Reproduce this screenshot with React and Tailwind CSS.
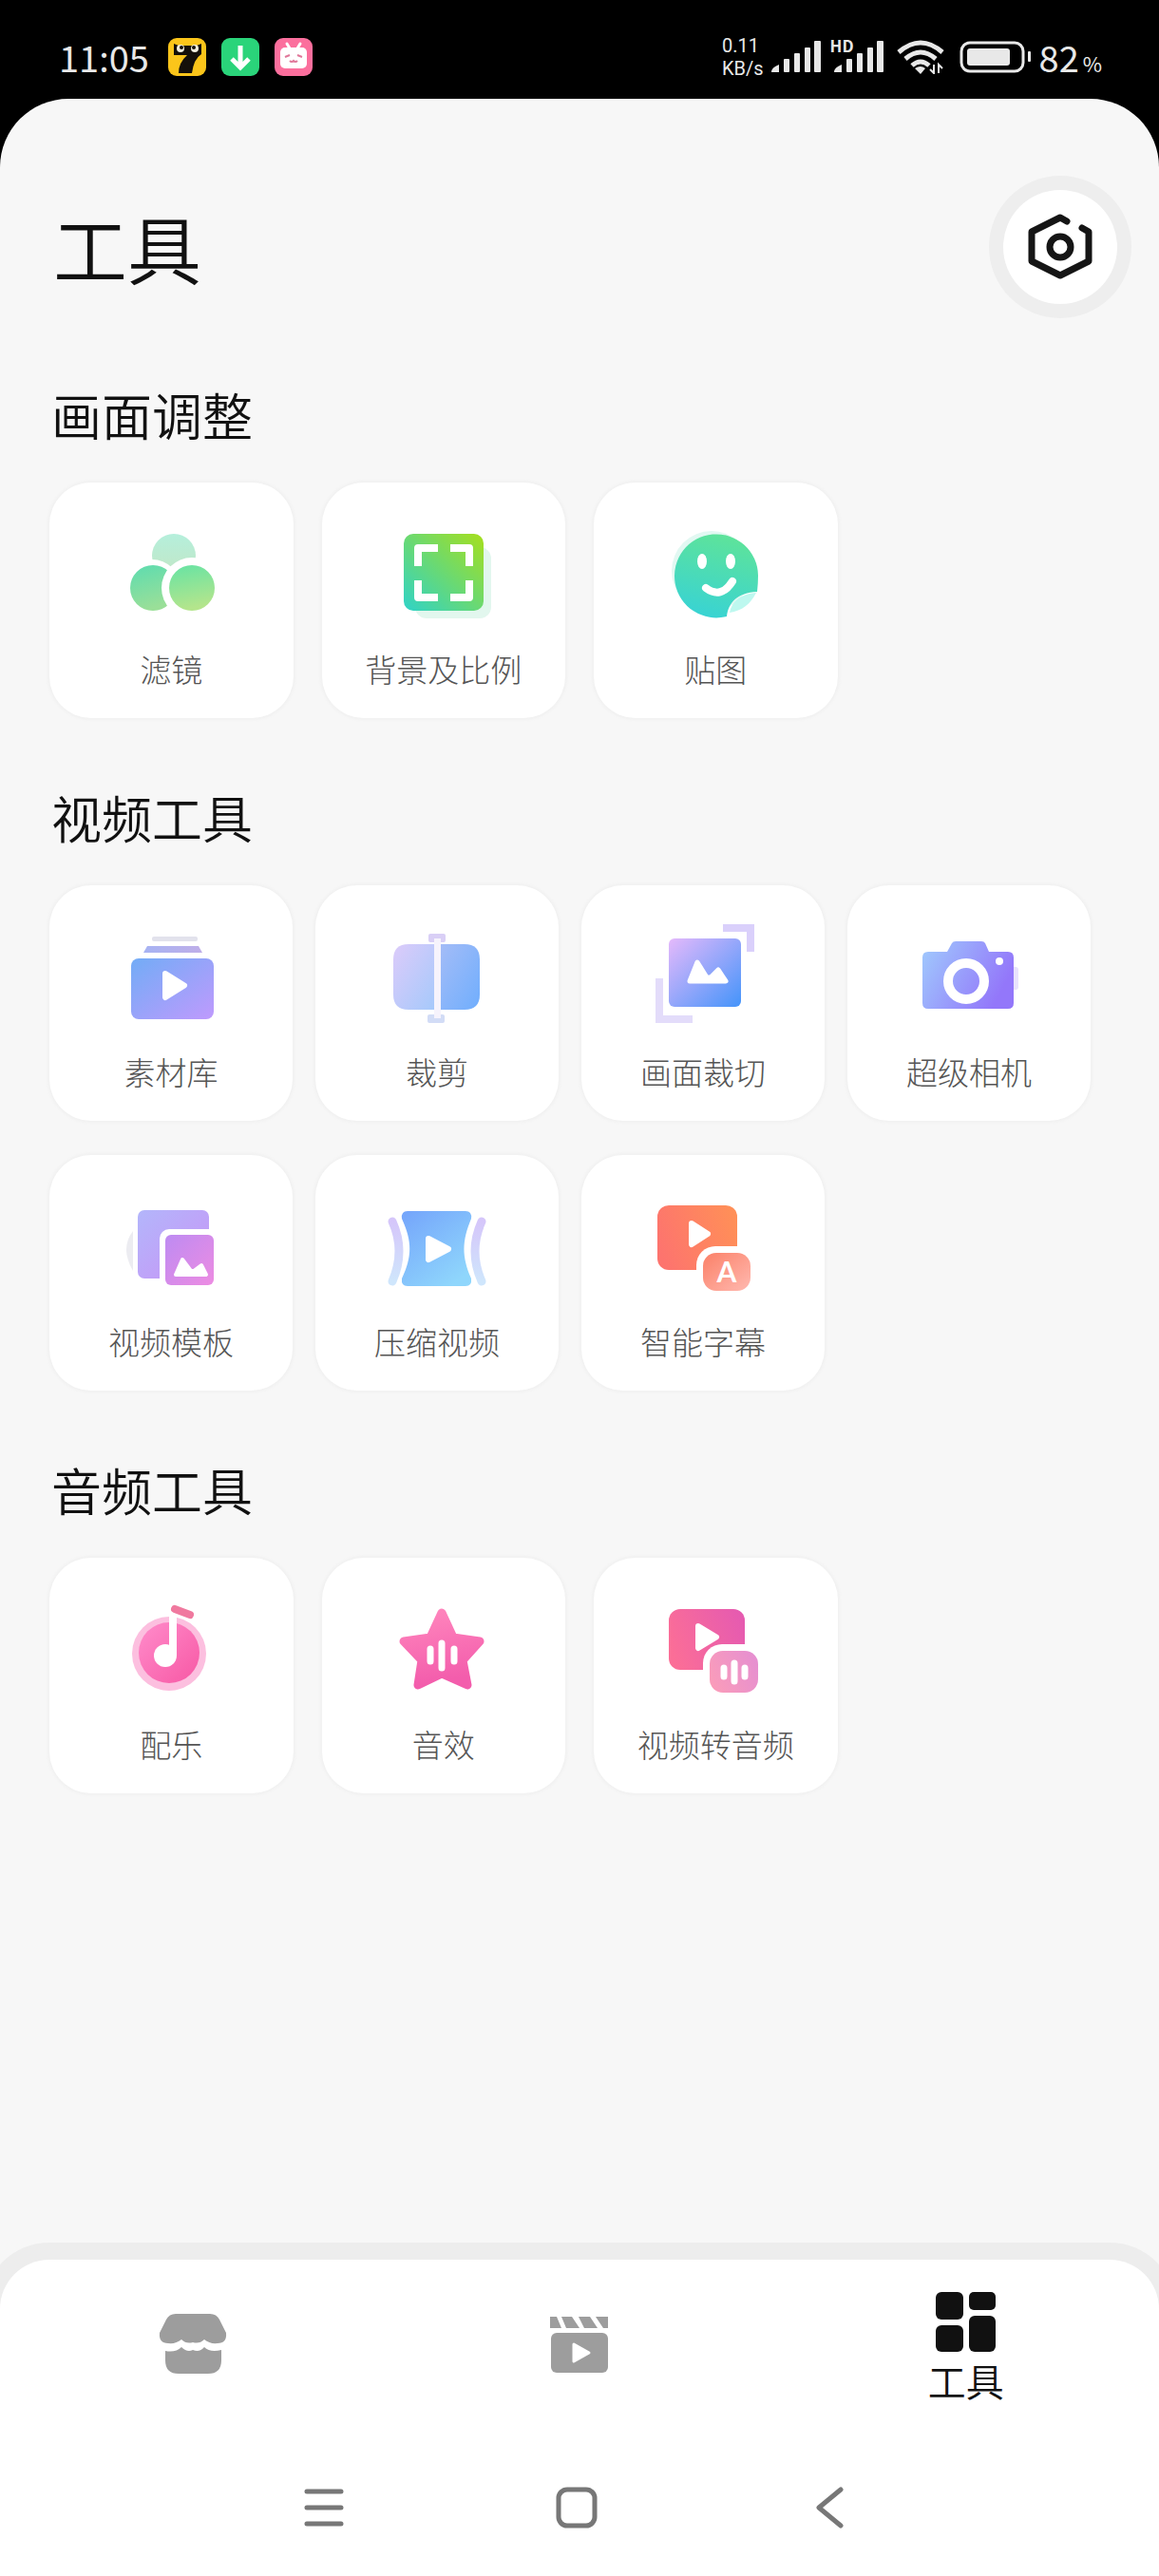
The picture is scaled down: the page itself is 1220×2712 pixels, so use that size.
import React from "react";

const play = (x, y, w, h) => `M${x + 3} ${y + 3} L${x + w - 3} ${y + h / 2} L${x + 3} ${y + h - 3} Z`;

function Play({ x, y, w, h }) {
  return <path d={play(x, y, w, h)} fill="#fff" stroke="#fff" strokeWidth="6" strokeLinejoin="round" />;
}

function Grad({ id, from, to, x1 = 0, y1 = 0, x2 = 1, y2 = 1 }) {
  return (
    <linearGradient id={id} x1={x1} y1={y1} x2={x2} y2={y2}>
      <stop offset="0" stopColor={from} />
      <stop offset="1" stopColor={to} />
    </linearGradient>
  );
}

function Icon({ children }) {
  return (
    <svg className="size-[120px]" viewBox="0 0 120 120" fill="none" aria-hidden="true">
      {children}
    </svg>
  );
}

const FilterIcon = () => (
  <Icon>
    <defs>
      <Grad id="f1" from="#b5efdc" to="#c3e6c4" x2={0} />
      <Grad id="f2" from="#5cdcb0" to="#9adf98" x2={0.3} />
      <Grad id="f3" from="#66e3a4" to="#b4e58c" x2={0.2} />
    </defs>
    <circle cx="63" cy="41" r="23" fill="url(#f1)" />
    <circle cx="40" cy="75" r="30" fill="#fff" />
    <circle cx="82" cy="75" r="30" fill="#fff" />
    <circle cx="41" cy="75" r="24" fill="url(#f2)" />
    <circle cx="82" cy="75" r="32" fill="#fff" />
    <circle cx="82" cy="75" r="24" fill="url(#f3)" />
  </Icon>
);

const RatioIcon = () => (
  <Icon>
    <defs>
      <Grad id="r1" from="#2fd3c8" to="#a6df1c" x1={0} y1={1} x2={1} y2={0} />
    </defs>
    <rect x="30" y="32" width="80" height="75" rx="12" fill="#e2f7ee" />
    <rect x="18" y="18" width="84" height="81" rx="10" fill="url(#r1)" />
    <path d="M54 33H33V52M67 33H87V52M33 67V85H54M87 67V85H67" stroke="#fff" strokeWidth="8" strokeLinejoin="round" />
  </Icon>
);

const StickerIcon = () => (
  <Icon>
    <defs>
      <Grad id="s1" from="#5ee39a" to="#38d3d4" x1={0.6} y1={0} x2={0.35} y2={1} />
    </defs>
    <circle cx="56" cy="57" r="42" fill="#e2f8f2" />
    <path d="M105 62A44 44 0 1 0 72 105C74 90 83 80 104 79Q105 70 105 62Z" fill="url(#s1)" />
    <path d="M75 101C77 90 86 81 103 80C97 92 88 99 75 101Z" fill="#bdf8ef" />
    <ellipse cx="46" cy="47" rx="5" ry="8" fill="#fff" />
    <ellipse cx="76" cy="47" rx="5" ry="8" fill="#fff" />
    <path d="M50 75Q66 87 78 68" stroke="#fff" strokeWidth="8" strokeLinecap="round" />
  </Icon>
);

const LibraryIcon = () => (
  <Icon>
    <defs>
      <Grad id="l1" from="#72acf6" to="#bf9afd" />
      <Grad id="l2" from="#a6b3f3" to="#bfaee8" y2={0} />
    </defs>
    <rect x="40" y="18" width="48" height="5" rx="2" fill="#e2e2ec" />
    <path d="M35 28H89L93 35H31Z" fill="url(#l2)" />
    <rect x="18" y="41" width="87" height="64" rx="8" fill="url(#l1)" />
    <Play x={51} y={54} w={26} h={31} />
  </Icon>
);

const TrimIcon = () => (
  <Icon>
    <defs>
      <Grad id="t1" from="#dccbfa" to="#a6c9fb" />
      <Grad id="t2" from="#a3bcf7" to="#70aefd" />
    </defs>
    <path d="M57 26V95H30Q14 95 14 79V42Q14 26 30 26Z" fill="url(#t1)" />
    <path d="M64 26H89Q105 26 105 42V79Q105 95 89 95H64Z" fill="url(#t2)" />
    <rect x="51" y="15" width="18" height="9" rx="2" fill="#d9cff6" />
    <rect x="50" y="100" width="18" height="9" rx="2" fill="#d2dcf6" />
    <rect x="57" y="20" width="7" height="84" fill="#f6f3fc" />
  </Icon>
);

const CropIcon = () => (
  <Icon>
    <defs>
      <Grad id="c1" from="#e5b9fb" to="#4494fa" />
    </defs>
    <path d="M81 9H110V34" stroke="#dad0fb" strokeWidth="8" />
    <path d="M14 62V105H49" stroke="#e3dcfa" strokeWidth="8" />
    <rect x="24" y="20" width="76" height="72" rx="6" fill="url(#c1)" />
    <path d="M46 65L54 45L64 61H68L76 53L84 65Z" fill="#fff" stroke="#fff" strokeWidth="5" strokeLinejoin="round" />
  </Icon>
);

const CameraIcon = () => (
  <Icon>
    <defs>
      <Grad id="m1" from="#a0cbfd" to="#9377fa" y2={0.4} />
    </defs>
    <rect x="104" y="50" width="8" height="24" rx="3" fill="#e9e2fd" />
    <path d="M17 34H37L42 25Q43 23 46 23H73Q76 23 77 25L81 34H101Q107 34 107 40V88Q107 94 101 94H17Q11 94 11 88V40Q11 34 17 34Z" fill="url(#m1)" />
    <circle cx="57" cy="65" r="19" stroke="#fff" strokeWidth="10" />
    <circle cx="92" cy="44" r="4" fill="#fff" />
  </Icon>
);

const TemplateIcon = () => (
  <Icon>
    <defs>
      <Grad id="p1" from="#b3b6fb" to="#c894f6" />
      <Grad id="p2" from="#bd8bf2" to="#ed8ce2" />
    </defs>
    <path d="M20 44Q6 62 20 86Z" fill="#ececf1" />
    <rect x="25" y="22" width="75" height="72" rx="7" fill="url(#p1)" />
    <rect x="48" y="42" width="64" height="66" rx="10" fill="#fff" />
    <rect x="54" y="48" width="51" height="53" rx="6" fill="url(#p2)" />
    <path d="M65 90L72 74L81 86H84L92 80L97 90Z" fill="#fff" stroke="#fff" strokeWidth="4" strokeLinejoin="round" />
  </Icon>
);

const CompressIcon = () => (
  <Icon>
    <defs>
      <Grad id="z1" from="#74a4fb" to="#8fd6fc" x2={0.7} />
      <Grad id="z2" from="#d5c6fa" to="#cfe6fc" x2={0} />
    </defs>
    <path d="M13 34Q27 65 13 97" stroke="url(#z2)" strokeWidth="9" strokeLinecap="round" />
    <path d="M107 34Q93 65 107 97" stroke="url(#z2)" strokeWidth="9" strokeLinecap="round" />
    <path d="M29 23H90Q97 23 96 31C86 55 86 71 96 94Q97 102 90 102H29Q22 102 23 94C34 71 34 55 23 31Q22 23 29 23Z" fill="url(#z1)" stroke="#fff" strokeWidth="5" paintOrder="stroke" />
    <Play x={48} y={49} w={27} h={28} />
  </Icon>
);

const SubtitleIcon = () => (
  <Icon>
    <defs>
      <Grad id="b1" from="#fd746e" to="#ff8f58" y1={0.6} y2={0.3} />
      <Grad id="b2" from="#fb8067" to="#ffb9b0" />
    </defs>
    <rect x="12" y="17" width="84" height="68" rx="12" fill="url(#b1)" />
    <rect x="53" y="60" width="64" height="54" rx="20" fill="#fff" />
    <rect x="60" y="67" width="50" height="40" rx="14" fill="url(#b2)" />
    <Play x={45} y={33} w={23} h={28} />
    <text x="85" y="98" textAnchor="middle" fontSize="30" fontWeight="700" fill="#fff" fontFamily="Lato, sans-serif">
      A
    </text>
  </Icon>
);

const MusicIcon = () => (
  <Icon>
    <defs>
      <Grad id="n1" from="#ff8ccb" to="#f758a4" />
    </defs>
    <circle cx="58" cy="65" r="39" fill="#fcbfdf" />
    <circle cx="58" cy="64" r="32" fill="url(#n1)" />
    <circle cx="54" cy="67" r="12" fill="#fff" />
    <path d="M58 20H66V67H58Z" fill="#fff" />
    <path d="M64 18L80 24" stroke="#f0799f" strokeWidth="8" strokeLinecap="round" />
  </Icon>
);

const StarIcon = () => (
  <Icon>
    <defs>
      <Grad id="a1" from="#ff86bd" to="#f35dac" x2={0.2} />
    </defs>
    <path d="M58 22L70 48L98 52L80 72L85 98L58 86L33 98L37 72L18 52L46 48Z" fill="url(#a1)" stroke="url(#a1)" strokeWidth="9" strokeLinejoin="round" />
    <path d="M46 60V73M58 54V80M71 60V73" stroke="#fff" strokeWidth="7" strokeLinecap="round" />
  </Icon>
);

const VideoAudioIcon = () => (
  <Icon>
    <defs>
      <Grad id="v1" from="#fb6e97" to="#e65bb0" y1={0.6} y2={0.3} />
      <Grad id="v2" from="#fa9cba" to="#e68fd0" y1={0.7} y2={0.3} />
    </defs>
    <rect x="11" y="18" width="80" height="64" rx="12" fill="url(#v1)" />
    <rect x="47" y="55" width="65" height="57" rx="20" fill="#fff" />
    <rect x="54" y="62" width="51" height="44" rx="14" fill="url(#v2)" />
    <Play x={39} y={33} w={25} h={29} />
    <path d="M69 80V89M80 75V94M91 80V89" stroke="#fff" strokeWidth="7" strokeLinecap="round" />
  </Icon>
);

const sections = [
  {
    title: "画面调整",
    grid: "gap-x-[30px]",
    items: [["滤镜", FilterIcon], ["背景及比例", RatioIcon], ["贴图", StickerIcon]],
  },
  {
    title: "视频工具",
    grid: "gap-x-6 mr-5",
    items: [
      ["素材库", LibraryIcon], ["裁剪", TrimIcon], ["画面裁切", CropIcon], ["超级相机", CameraIcon],
      ["视频模板", TemplateIcon], ["压缩视频", CompressIcon], ["智能字幕", SubtitleIcon],
    ],
  },
  {
    title: "音频工具",
    grid: "gap-x-[30px]",
    items: [["配乐", MusicIcon], ["音效", StarIcon], ["视频转音频", VideoAudioIcon]],
  },
];

function Signal() {
  return (
    <svg className="h-[34px] w-[52px]" viewBox="0 0 52 34" fill="#e8e8e8" aria-hidden="true">
      <path d="M0 33Q0 28 8 25V33Z" />
      <rect x="13" y="19" width="6" height="14" rx="1" />
      <rect x="24" y="13" width="6" height="20" rx="1" />
      <rect x="35" y="7" width="6" height="26" rx="1" />
      <rect x="45" y="0" width="7" height="33" rx="1" />
    </svg>
  );
}

function StatusBar() {
  return (
    <header className="flex h-[104px] items-center justify-between bg-black pt-4 pr-[60px] pl-[62px] text-[#e8e8e8]">
      <div className="flex items-center gap-4">
        <span className="mr-1 text-[38px] leading-none">11:05</span>
        <svg className="size-10" viewBox="0 0 40 40" aria-hidden="true">
          <rect width="40" height="40" rx="9" fill="#fbc51a" />
          <path d="M6 6L11 8H30L35 6V17Q27 22 25 37H11Q11 26 20 18H6Z" fill="#15100a" />
          <circle cx="13" cy="11" r="4" fill="#f3eedd" />
          <circle cx="28" cy="11" r="4" fill="#f3eedd" />
          <circle cx="14" cy="10" r="2" fill="#15100a" />
          <circle cx="27" cy="10" r="2" fill="#15100a" />
        </svg>
        <svg className="size-10" viewBox="0 0 40 40" fill="none" aria-hidden="true">
          <rect width="40" height="40" rx="9" fill="#2ad47a" />
          <path d="M20 8V30M11 22L20 31L29 22" stroke="#fff" strokeWidth="5" />
        </svg>
        <svg className="size-10" viewBox="0 0 40 40" fill="none" aria-hidden="true">
          <rect width="40" height="40" rx="9" fill="#fb6f9d" />
          <rect x="6" y="10" width="28" height="22" rx="5" fill="#fff" />
          <path d="M13 6L16 11M27 6L24 11" stroke="#fff" strokeWidth="3" strokeLinecap="round" />
          <path d="M11 20L16 18M29 20L24 18M16 24Q18 26 20 24Q22 26 24 24" stroke="#e0789a" strokeWidth="2" />
        </svg>
      </div>
      <div className="flex items-center">
        <div className="mr-2 font-['Roboto',sans-serif] text-[20px] leading-[24px]">
          <div>0.11</div>
          <div>KB/s</div>
        </div>
        <Signal />
        <div className="relative ml-3.5">
          <span className="absolute -top-1 -left-1 text-[17px] leading-none font-bold">HD</span>
          <Signal />
        </div>
        <svg className="ml-3.5 h-9 w-[50px]" viewBox="0 0 50 36" fill="none" stroke="#e8e8e8" strokeWidth="5" aria-hidden="true">
          <path d="M2 13Q25 -7 48 13" />
          <path d="M9 20Q25 6 41 20" />
          <path d="M16 27Q25 19 34 27" />
          <path d="M19 30Q25 26 30 30L25 36Z" fill="#e8e8e8" stroke="none" />
          <path d="M39 26V35L35 31M44 35V26L48 30" strokeWidth="2" />
        </svg>
        <svg className="ml-4 h-[34px] w-[76px]" viewBox="0 0 76 34" fill="none" aria-hidden="true">
          <rect x="2" y="2" width="65" height="30" rx="9" stroke="#e8e8e8" strokeWidth="3" />
          <rect x="8" y="8" width="45" height="18" rx="3" fill="#e8e8e8" />
          <rect x="72" y="11" width="3" height="11" rx="1" fill="#e8e8e8" />
        </svg>
        <span className="ml-2 text-[38px] leading-none">82</span>
        <span className="ml-1 pt-3 text-[22px] leading-none">%</span>
      </div>
    </header>
  );
}

function Card({ label, Glyph }) {
  return (
    <button
      type="button"
      className="flex flex-col items-center rounded-[44px] bg-white pt-9 pb-7 shadow-[0_0_3px_2px_#f1f1f1]"
    >
      <Glyph />
      <span className="mt-4 text-[33px] leading-[48px] font-light whitespace-nowrap text-[#555]">{label}</span>
    </button>
  );
}

function BottomNav() {
  return (
    <footer className="rounded-t-[52px] bg-white pt-[34px] pb-[50px] shadow-[0_0_0_18px_#ededed]">
      <nav className="grid grid-cols-3 items-center">
        <button type="button" aria-label="商店" className="flex justify-center pb-2">
          <svg className="h-16 w-[72px]" viewBox="0 0 72 64" fill="#9d9d9d" aria-hidden="true">
            <path d="M18 0H54Q61 0 64 6L71 20Q72 31 62 31Q54 32 48 27Q43 32 36 30Q29 32 24 27Q18 32 10 31Q0 31 1 20L8 6Q11 0 18 0Z" />
            <path d="M7 39Q18 41 24 35Q30 41 36 38Q43 41 48 35Q54 41 66 38V49Q66 63 52 63H21Q7 63 7 49Z" />
          </svg>
        </button>
        <button type="button" aria-label="视频" className="flex justify-center pb-2">
          <svg className="size-[62px]" viewBox="0 0 62 62" aria-hidden="true">
            <path d="M0 2H7L12 14H0ZM12 2H23L31 14H17ZM30 2H42L50 14H36ZM48 2H61V14H56Z" fill="#9d9d9d" />
            <rect x="1" y="19" width="60" height="42" rx="6" fill="#9d9d9d" />
            <path d="M25 31L41 40L25 49Z" fill="#fff" stroke="#fff" strokeWidth="3" strokeLinejoin="round" />
          </svg>
        </button>
        <button type="button" aria-current="page" className="flex flex-col items-center text-[#111]">
          <svg className="size-[63px]" viewBox="0 0 63 63" fill="#111" aria-hidden="true">
            <rect x="0" y="0" width="29" height="29" rx="6" />
            <rect x="35" y="0" width="28" height="19" rx="5" />
            <rect x="0" y="35" width="29" height="28" rx="6" />
            <rect x="35" y="25" width="28" height="38" rx="6" />
          </svg>
          <span className="mt-1.5 text-[40px] leading-[48px] font-[350]">工具</span>
        </button>
      </nav>
      <nav className="mt-[88px] grid grid-cols-3 justify-items-center pr-[17.5%] pl-[17%]">
        <button type="button" aria-label="菜单">
          <svg className="size-11" viewBox="0 0 44 44" stroke="#777" strokeWidth="5" strokeLinecap="round" aria-hidden="true">
            <path d="M4 5H40M4 22H40M4 39H40" />
          </svg>
        </button>
        <button type="button" aria-label="主页">
          <svg className="size-11" viewBox="0 0 44 44" fill="none" stroke="#777" strokeWidth="5" aria-hidden="true">
            <rect x="3" y="3" width="38" height="38" rx="9" />
          </svg>
        </button>
        <button type="button" aria-label="返回">
          <svg className="size-11" viewBox="0 0 44 44" fill="none" stroke="#777" strokeWidth="5" strokeLinecap="round" strokeLinejoin="round" aria-hidden="true">
            <path d="M34 3L11 22L34 41" />
          </svg>
        </button>
      </nav>
    </footer>
  );
}

export default function App() {
  return (
    <div className="flex min-h-screen flex-col bg-black font-['Noto_Sans_CJK_SC',sans-serif]">
      <StatusBar />
      <div className="flex flex-1 flex-col overflow-hidden rounded-t-[72px] bg-[#f7f7f7]">
        <main className="flex-1 px-[52px] pt-24 pb-24">
          <div className="-mr-2 flex items-center justify-between">
            <h1 className="pl-1 text-[78px] leading-[96px] font-[350] text-[#111]">工具</h1>
            <button
              type="button"
              aria-label="设置"
              className="flex size-[120px] items-center justify-center rounded-full bg-white shadow-[0_0_0_15px_#eeeeee]"
            >
              <svg className="size-[72px]" viewBox="0 0 72 72" fill="none" stroke="#151515" strokeWidth="7" strokeLinecap="round" strokeLinejoin="round" aria-hidden="true">
                <path d="M43 9L36 5L6 20V51L36 66L66 51V20L59 16" />
                <circle cx="36" cy="36" r="11" />
              </svg>
            </button>
          </div>
          <div className="flex flex-col gap-[68px] pt-20">
            {sections.map((s) => (
              <section key={s.title}>
                <h2 className="pl-0.5 text-[53px] leading-[72px] font-[350] text-[#111]">{s.title}</h2>
                <div className={`mt-9 grid grid-cols-4 gap-y-9 ${s.grid}`}>
                  {s.items.map(([label, Glyph]) => (
                    <Card key={label} label={label} Glyph={Glyph} />
                  ))}
                </div>
              </section>
            ))}
          </div>
        </main>
        <BottomNav />
      </div>
    </div>
  );
}
